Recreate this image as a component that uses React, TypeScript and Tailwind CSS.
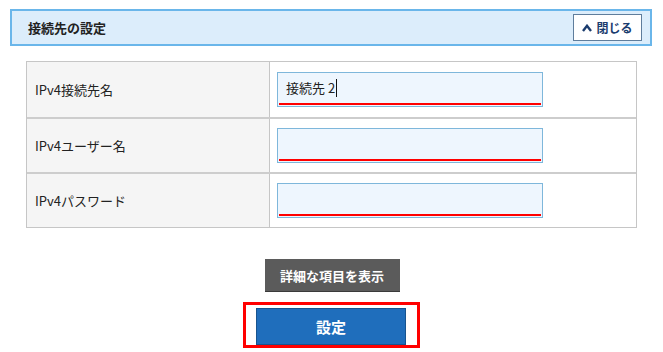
import React from "react";

const rows = [
    { label: "IPv4接続先名", value: "接続先 2", focused: true },
    { label: "IPv4ユーザー名", value: "" },
    { label: "IPv4パスワード", value: "" },
];

const App: React.FC = () => {
    return (
        <div className="w-[663px] h-[352px] bg-white text-[#222] overflow-hidden font-['Noto_Sans_CJK_JP',sans-serif]">
            {/* === header === */}
            <div className="pt-[9px] pl-[10px] pr-[11px]">
                <div className="h-[37px] border-2 border-[#6ab6ea] bg-[#dcedfb] flex items-center justify-between pl-[16px] pr-[8px]">
                    <span className="text-[13px] font-bold leading-none">接続先の設定</span>
                    <button className="w-[69px] h-[27px] bg-white border border-[#5f7d9c] flex items-center justify-center gap-[4px] text-[#1b3c6e] text-[12px] font-bold leading-none">
                        <svg width="10" height="8" viewBox="0 0 10 8">
                            <path d="M1 7 L5 1.8 L9 7" fill="none" stroke="#1b3c6e" strokeWidth="2.4" />
                        </svg>
                        閉じる
                    </button>
                </div>
            </div>

            {/* === form === */}
            <div className="mt-[15px] mx-[26px] border border-[#c6c6c6]">
                {rows.map((row, i) => (
                    <div key={i} className={"flex h-[55px] " + (i > 0 ? "border-t-2 border-[#cdcdcd]" : "")}>
                        <div className="w-[243px] bg-[#f5f5f5] border-r border-[#c6c6c6] flex items-center pl-[8px] text-[13px]">
                            {row.label}
                        </div>
                        <div className="flex-1 flex items-center pl-[7px]">
                            <div className="w-[266px] h-[35px] bg-[#eef6fe] border border-[#7eb7db] flex flex-col justify-between px-[1px] pb-[1px]">
                                <div className="flex-1 flex items-center pl-[7px] text-[13px]">
                                    {row.value}
                                    {row.focused && <span className="ml-[1px] w-px h-[18px] bg-[#111]" />}
                                </div>
                                <div className="h-[2px] bg-[#ff0000]" />
                            </div>
                        </div>
                    </div>
                ))}
            </div>

            {/* === buttons === */}
            <div className="flex flex-col items-center mt-[31px]">
                <button className="w-[135px] h-[33px] bg-[#5b5b5b] border-b border-[#3a3a3a] text-white text-[13px] font-bold leading-none ml-[1px]">
                    詳細な項目を表示
                </button>
                <div className="mt-[10px] w-[177px] h-[46px] border-[3px] border-[#ff0000] flex justify-center pt-[3px] -ml-[1px]">
                    <button className="w-[150px] h-[37px] bg-[#1f6ebc] border border-[#17548f] text-white text-[15px] font-bold leading-none">
                        設定
                    </button>
                </div>
            </div>
        </div>
    );
};

export default App;
